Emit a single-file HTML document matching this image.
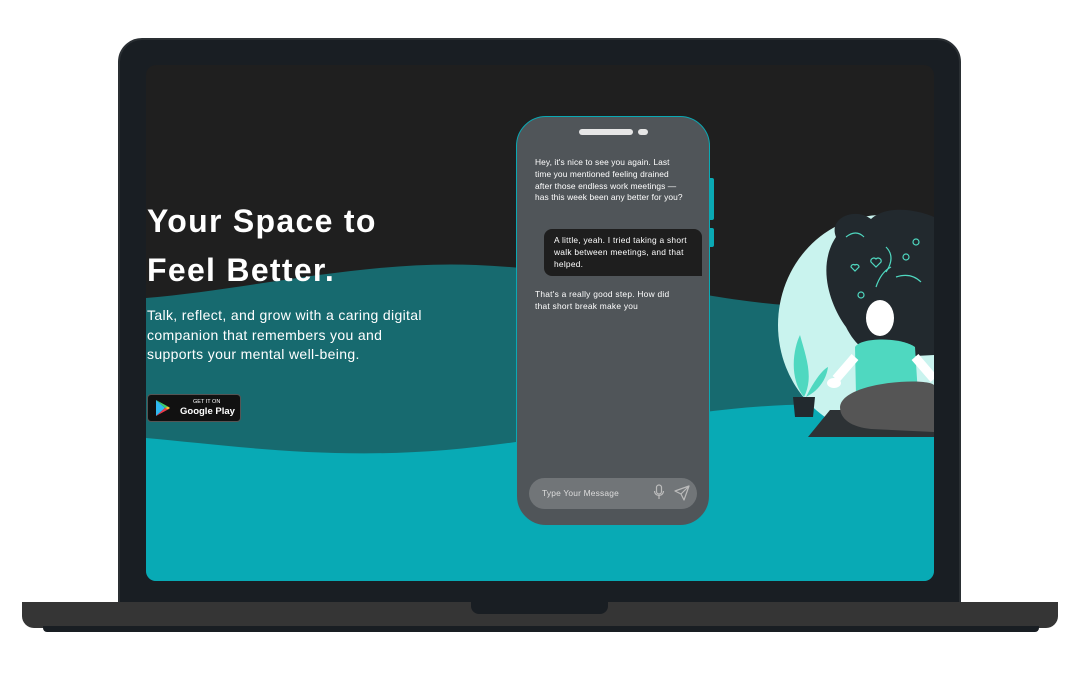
<!DOCTYPE html>
<html><head><meta charset="utf-8"><style>
*{margin:0;padding:0;box-sizing:border-box}
body{width:1080px;height:686px;background:#fff;position:relative;overflow:hidden;font-family:"Liberation Sans",sans-serif}
.lid{position:absolute;left:118px;top:38px;width:843px;height:570px;background:#191e23;border-radius:24px 24px 0 0;border:2px solid #2a2f33}
.screen{position:absolute;left:146px;top:65px;width:788px;height:516px;background:#1f1f1f;border-radius:10px;overflow:hidden}
.base{position:absolute;left:22px;top:602px;width:1036px;height:26px;background:#353535;border-radius:0 0 12px 12px}
.lip{position:absolute;left:43px;top:624px;width:996px;height:8px;background:#191e23;border-radius:0 0 4px 4px}
.notch{position:absolute;left:471px;top:602px;width:137px;height:12px;background:#191e23;border-radius:0 0 8px 8px}
.h1{position:absolute;left:147px;color:#fff;font-size:32px;font-weight:bold;letter-spacing:1.3px}
.p{position:absolute;left:147px;top:306px;color:#fff;font-size:14px;line-height:19.5px;width:290px;letter-spacing:0.35px}
.gp{position:absolute;left:147px;top:394px;width:94px;height:28px;background:#111;border:1px solid #555;border-radius:4px;color:#fff}
.phone{position:absolute;left:516px;top:116px;width:194px;height:410px;background:#505559;border:1.5px solid #0aa9b4;border-radius:30px}
.msg{position:absolute;color:#fff;font-size:8.4px;line-height:11.8px;letter-spacing:0.25px}
</style></head><body>
<div class="lid"></div>
<div class="screen">
<svg width="788" height="516" style="position:absolute;left:0;top:0">
<path d="M0 233 C100 225 220 195 330 200 C450 205 560 235 640 240 C720 245 760 235 788 230 L788 516 L0 516Z" fill="#176a6f"/>
<path d="M0 373 C80 380 180 395 300 385 C420 375 520 345 640 340 C720 337 760 345 788 350 L788 516 L0 516Z" fill="#08aab5"/>
</svg>
<svg width="160" height="232" viewBox="0 0 160 232" style="position:absolute;left:630px;top:142px">
<ellipse cx="106" cy="118" rx="104" ry="110" fill="#c9f3ee"/>
<path d="M60 30 C52 10 80 0 95 12 C110 -2 140 2 158 10 L158 148 L120 150 C95 152 80 140 70 120 C55 100 40 60 60 30Z" fill="#22292e"/>
<g fill="none" stroke="#4fd8c0" stroke-width="1.2"><path d="M95 55 l5 5 l5-5 a3 3 0 0 0-5-3 a3 3 0 0 0-5 3z"/><path d="M75 60 l4 4 l4-4 a2.5 2.5 0 0 0-4-2 a2.5 2.5 0 0 0-4 2z"/><path d="M110 40 q10 10 0 25"/><path d="M120 70 q15-5 25 5"/><circle cx="130" cy="50" r="3"/><circle cx="85" cy="88" r="3"/><path d="M100 80 q5-15 15-20"/><path d="M70 30 q10-8 18 0"/><circle cx="140" cy="35" r="3"/></g>
<path d="M54 203 L158 203 L158 230 L32 230Z" fill="#2d3235"/>
<ellipse cx="104" cy="111" rx="14" ry="18" fill="#fff"/>
<path d="M79 140 C85 130 125 130 139 140 L142 188 L80 188Z" fill="#4fd8c0"/>
<path d="M79 150 L60 172 M139 150 L158 172" stroke="#fff" stroke-width="9"/>
<path d="M64 200 C66 175 150 170 158 178 L158 225 L95 222 C75 220 64 212 64 200Z" fill="#555"/>
<ellipse cx="58" cy="176" rx="7" ry="5" fill="#fff"/>
<path d="M28 190 C12 170 18 140 24 128 C30 150 38 170 28 190Z" fill="#4fd8c0"/>
<path d="M30 190 C40 170 48 162 52 160 C50 175 40 185 30 190Z" fill="#4fd8c0"/>
<path d="M17 190 L39 190 L37 210 L19 210Z" fill="#22292e"/>
</svg>
</div>
<div class="h1" style="top:203px">Your Space to</div>
<div class="h1" style="top:252px">Feel Better.</div>
<div class="p">Talk, reflect, and grow with a caring digital companion that remembers you and supports your mental well-being.</div>
<div class="gp">
<svg width="16" height="18" style="position:absolute;left:7px;top:4px" viewBox="0 0 16 18"><path d="M1 1 L10 9 L1 17Z" fill="#2fb8f0"/><path d="M1 1 L13 7.5 L10 9Z" fill="#3fd06a"/><path d="M1 17 L13 10.5 L10 9Z" fill="#ee3b4a"/><path d="M13 7.5 L15 9 L13 10.5 L10 9Z" fill="#fbc02d"/></svg>
<div style="position:absolute;left:45px;top:4px;font-size:5.5px">GET IT ON</div>
<div style="position:absolute;left:32px;top:11px;font-size:9.5px;font-weight:bold">Google Play</div>
</div>
<div class="phone">
<div style="position:absolute;left:62px;top:12px;width:54px;height:6px;background:#e6e6e6;border-radius:3px"></div>
<div style="position:absolute;left:121px;top:12px;width:10px;height:6px;background:#e6e6e6;border-radius:3px"></div>
<div class="msg" style="left:18px;top:40px;width:150px;letter-spacing:0.1px">Hey, it's nice to see you again. Last time you mentioned feeling drained after those endless work meetings — has this week been any better for you?</div>
<div style="position:absolute;left:27px;top:112px;width:158px;height:47px;background:#1e1e1e;border-radius:8px 8px 0 8px"></div>
<div class="msg" style="left:37px;top:118px;width:140px">A little, yeah. I tried taking a short walk between meetings, and that helped.</div>
<div class="msg" style="left:18px;top:172px;width:140px">That's a really good step. How did that short break make you</div>
<div style="position:absolute;left:12px;top:361px;width:168px;height:31px;background:#717578;border-radius:16px"></div>
<div style="position:absolute;left:25px;top:371px;color:#ddd;font-size:8.4px;letter-spacing:0.2px">Type Your Message</div>
<svg width="12" height="16" viewBox="0 0 12 16" style="position:absolute;left:136px;top:367px"><rect x="3.5" y="1" width="5" height="9" rx="2.5" fill="none" stroke="#bbb" stroke-width="1.2"/><path d="M1.5 7 a4.5 4.5 0 0 0 9 0 M6 11.5 V15" fill="none" stroke="#bbb" stroke-width="1.2"/></svg>
<svg width="16" height="16" viewBox="0 0 16 16" style="position:absolute;left:157px;top:368px"><path d="M15 1 L1 6 L7 9 L10 15Z M7 9 L15 1" fill="none" stroke="#bbb" stroke-width="1.2" stroke-linejoin="round"/></svg>
</div>
<div style="position:absolute;left:710px;top:178px;width:4px;height:42px;background:#0aa9b4;border-radius:0 2px 2px 0"></div>
<div style="position:absolute;left:710px;top:228px;width:4px;height:19px;background:#0aa9b4;border-radius:0 2px 2px 0"></div>
<div class="base"></div>
<div class="lip"></div>
<div class="base" style="height:24px"></div>
<div class="notch"></div>
</body></html>
